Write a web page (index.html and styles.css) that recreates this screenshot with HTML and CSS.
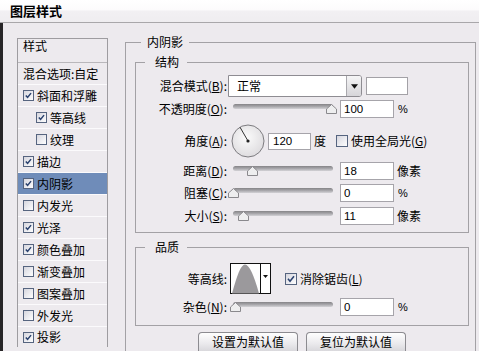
FILE: index.html
```html
<!DOCTYPE html>
<html>
<head>
<meta charset="utf-8">
<link rel="stylesheet" href="styles.css">
</head>
<body>
<div class="window">
  <div class="titlebar">图层样式</div>
  <div class="main">
    <div class="sidebar">
      <div class="item head">样式</div>
      <div class="item">混合选项:自定</div>
      <div class="item"><span class="cb"><svg viewBox="0 0 11 11"><path d="M2.2 5.4 L4.4 7.8 L8.6 2.6"/></svg></span>斜面和浮雕</div>
      <div class="item sub"><span class="cb"><svg viewBox="0 0 11 11"><path d="M2.2 5.4 L4.4 7.8 L8.6 2.6"/></svg></span>等高线</div>
      <div class="item sub"><span class="cb"></span>纹理</div>
      <div class="item"><span class="cb"><svg viewBox="0 0 11 11"><path d="M2.2 5.4 L4.4 7.8 L8.6 2.6"/></svg></span>描边</div>
      <div class="item sel"><span class="cb"><svg viewBox="0 0 11 11"><path d="M2.2 5.4 L4.4 7.8 L8.6 2.6"/></svg></span>内阴影</div>
      <div class="item"><span class="cb"></span>内发光</div>
      <div class="item"><span class="cb"><svg viewBox="0 0 11 11"><path d="M2.2 5.4 L4.4 7.8 L8.6 2.6"/></svg></span>光泽</div>
      <div class="item"><span class="cb"><svg viewBox="0 0 11 11"><path d="M2.2 5.4 L4.4 7.8 L8.6 2.6"/></svg></span>颜色叠加</div>
      <div class="item"><span class="cb"></span>渐变叠加</div>
      <div class="item"><span class="cb"></span>图案叠加</div>
      <div class="item"><span class="cb"></span>外发光</div>
      <div class="item last"><span class="cb"><svg viewBox="0 0 11 11"><path d="M2.2 5.4 L4.4 7.8 L8.6 2.6"/></svg></span>投影</div>
    </div>

    <div class="content">
      <fieldset class="group outer">
        <legend class="lg-outer">内阴影</legend>

        <fieldset class="group inner struct">
          <legend class="lg-inner">结构</legend>

          <div class="row r-mode">
            <span class="label">混合模式(<u>B</u>):</span>
            <div class="select">
              <span class="select-text">正常</span>
              <span class="select-btn"><svg viewBox="0 0 8 5"><path d="M0 0 H8 L4 5 Z"/></svg></span>
            </div>
            <span class="swatch"></span>
          </div>

          <div class="row r-opacity">
            <span class="label">不透明度(<u>O</u>):</span>
            <div class="slider"><div class="track"></div><svg class="thumb" style="left:93px" viewBox="0 0 11 10"><path d="M5.5 0.5 L10.5 5 L10.5 9.5 L0.5 9.5 L0.5 5 Z"/></svg></div>
            <span class="num">100</span>
            <span class="unit pct">%</span>
          </div>

          <div class="row r-angle">
            <span class="label">角度(<u>A</u>):</span>
            <svg class="dial" viewBox="0 0 34 34">
              <defs>
                <radialGradient id="dg" cx="45%" cy="40%" r="65%">
                  <stop offset="0" stop-color="#fbfbfb"/>
                  <stop offset="1" stop-color="#dcdadd"/>
                </radialGradient>
              </defs>
              <circle cx="17" cy="17" r="16" fill="url(#dg)" stroke="#7d7c80" stroke-width="1"/>
              <line x1="17" y1="17" x2="9" y2="3.2" stroke="#333" stroke-width="1"/>
              <circle cx="17" cy="17" r="1.6" fill="#222"/>
            </svg>
            <span class="num angle">120</span>
            <span class="unit deg">度</span>
            <span class="cb big"></span>
            <span class="cb-text">使用全局光(<u>G</u>)</span>
          </div>

          <div class="row r-dist">
            <span class="label">距离(<u>D</u>):</span>
            <div class="slider"><div class="track"></div><svg class="thumb" style="left:14px" viewBox="0 0 11 10"><path d="M5.5 0.5 L10.5 5 L10.5 9.5 L0.5 9.5 L0.5 5 Z"/></svg></div>
            <span class="num">18</span>
            <span class="unit">像素</span>
          </div>

          <div class="row r-choke">
            <span class="label">阻塞(<u>C</u>):</span>
            <div class="slider"><div class="track"></div><svg class="thumb" style="left:-5px" viewBox="0 0 11 10"><path d="M5.5 0.5 L10.5 5 L10.5 9.5 L0.5 9.5 L0.5 5 Z"/></svg></div>
            <span class="num">0</span>
            <span class="unit pct">%</span>
          </div>

          <div class="row r-size">
            <span class="label">大小(<u>S</u>):</span>
            <div class="slider"><div class="track"></div><svg class="thumb" style="left:5px" viewBox="0 0 11 10"><path d="M5.5 0.5 L10.5 5 L10.5 9.5 L0.5 9.5 L0.5 5 Z"/></svg></div>
            <span class="num">11</span>
            <span class="unit">像素</span>
          </div>
        </fieldset>

        <fieldset class="group inner quality">
          <legend class="lg-inner">品质</legend>

          <div class="row r-contour">
            <span class="label">等高线:</span>
            <svg class="contour" viewBox="0 0 41 31">
              <rect x="0.5" y="0.5" width="40" height="30" fill="#fff" stroke="#111"/>
              <path d="M2 30.5 C 7 12, 11 1.5, 15 1.5 C 19 1.5, 24 12, 29 30.5 Z" fill="#9b999c"/>
              <line x1="30.5" y1="0.5" x2="30.5" y2="30.5" stroke="#111"/>
              <path d="M33 12 H38 L35.5 15 Z" fill="#111"/>
            </svg>
            <span class="cb big aa"><svg viewBox="0 0 12 12"><path d="M2.4 5.8 L4.8 8.6 L9.6 2.8"/></svg></span>
            <span class="cb-text">消除锯齿(<u>L</u>)</span>
          </div>

          <div class="row r-noise">
            <span class="label">杂色(<u>N</u>):</span>
            <div class="slider"><div class="track"></div><svg class="thumb" style="left:-3px" viewBox="0 0 11 10"><path d="M5.5 0.5 L10.5 5 L10.5 9.5 L0.5 9.5 L0.5 5 Z"/></svg></div>
            <span class="num">0</span>
            <span class="unit pct">%</span>
          </div>
        </fieldset>

        <div class="buttons">
          <button class="btn">设置为默认值</button>
          <button class="btn">复位为默认值</button>
        </div>
      </fieldset>
    </div>
  </div>
</div>
</body>
</html>
```

FILE: styles.css
```css
* { box-sizing: border-box; }

html, body { margin: 0; padding: 0; }

body {
  width: 479px;
  height: 351px;
  overflow: hidden;
  background: #edeaee;
  color: #000;
  font-family: "Noto Sans CJK SC", "Liberation Sans", sans-serif;
  font-size: 12px;
  line-height: 16px;
}

.window {
  height: 351px;
  display: flex;
  flex-direction: column;
  overflow: hidden;
}

.titlebar {
  height: 23px;
  flex: none;
  padding-left: 10px;
  font-size: 13px;
  font-weight: bold;
  line-height: 22px;
  background: linear-gradient(#ffffff 0, #fcfbfc 45%, #f2f0f3 50%, #efedf0 100%);
  border-bottom: 1px solid #a9a7aa;
}

.main {
  flex: 1;
  min-height: 0;
  display: flex;
  align-items: flex-start;
  border-left: 3px solid #272527;
  overflow: hidden;
}

/* left list */
.sidebar {
  flex: none;
  width: 91px;
  margin-left: 14px;
  margin-top: 15px;
  border: 1px solid #9e9ca0;
  border-bottom: none;
}

.item {
  height: 22px;
  display: flex;
  align-items: center;
  padding-left: 5px;
  border-bottom: 1px solid #fbfafc;
  white-space: nowrap;
}

.item.last { height: 20px; border-bottom: none; }

.item.head {
  height: 24px;
  align-items: flex-start;
  line-height: 14px;
  border-bottom-color: #b9b7bb;
}

.item.sub { padding-left: 18px; }

.item.sel { background: #6f8cb9; }

.cb {
  flex: none;
  width: 11px;
  height: 11px;
  margin-right: 3px;
  border: 1px solid #56647f;
  background: linear-gradient(135deg, #d6d6de 0, #eeeef2 60%, #fdfdfd 100%);
  display: flex;
}

.cb svg {
  width: 100%;
  height: 100%;
  fill: none;
  stroke: #2b426f;
  stroke-width: 1.9;
}

.cb.big {
  width: 12px;
  height: 12px;
}

/* right content */
.content {
  flex: none;
  margin-left: 17px;
  padding-top: 11px;
}

.group {
  margin: 0;
  min-width: 0;
  border: 1px solid #a3a1a5;
}

.outer {
  width: 351px;
  height: 317px;
  padding: 0 6px 0 9px;
  border-bottom: none;
}

.lg-outer {
  margin-left: 6px;
  padding: 0 6px;
  line-height: 16px;
}

.inner {
  width: 334px;
  padding: 0;
}

.lg-inner {
  margin-left: 9px;
  padding: 0 8px 0 10px;
  line-height: 16px;
}

.struct {
  margin-top: 4px;
  padding-bottom: 7px;
}

.quality {
  margin-top: 6px;
  padding-bottom: 9px;
}

.row {
  display: flex;
  align-items: center;
  height: 19px;
  white-space: nowrap;
}

.label {
  flex: none;
  width: 91px;
  text-align: right;
}

.label u, .cb-text u { text-decoration-thickness: 1px; text-underline-offset: 1px; }

.r-mode { height: 22px; margin-top: 5px; }
.r-opacity { margin-top: 2px; }
.r-angle { height: 34px; margin-top: 6px; }
.r-dist { margin-top: 3px; }
.r-choke { margin-top: 3px; }
.r-size { margin-top: 4px; }
.r-contour { height: 31px; margin-top: 8px; }
.r-noise { margin-top: 3px; }

/* select */
.select {
  flex: none;
  margin-left: 1px;
  width: 134px;
  height: 22px;
  display: flex;
  border: 1px solid #8e8c92;
  border-radius: 0 3px 3px 0;
  background: #fff;
}

.select-text {
  flex: 1;
  padding-left: 8px;
  line-height: 20px;
}

.select-btn {
  flex: none;
  width: 15px;
  display: flex;
  align-items: center;
  justify-content: center;
  border-left: 1px solid #a9a8ad;
  border-radius: 0 2px 2px 0;
  background: linear-gradient(#f5f5f6, #d6d5d9);
}

.select-btn svg {
  width: 7px;
  height: 5px;
  fill: #111;
}

.swatch {
  flex: none;
  margin-left: 4px;
  width: 42px;
  height: 18px;
  background: #fff;
  border: 1px solid #a3a1a6;
}

/* slider */
.slider {
  position: relative;
  flex: none;
  width: 100px;
  height: 11px;
  margin-left: 6px;
  margin-top: 2px;
}

.track {
  height: 5px;
  border-radius: 3px;
  background: linear-gradient(#858487 0, #a3a2a6 45%, #d3d2d6 100%);
}

.thumb {
  position: absolute;
  top: 0;
  width: 11px;
  height: 10px;
  fill: #eeeeef;
  stroke: #8a898d;
  stroke-width: 1;
}

/* numeric fields */
.num {
  flex: none;
  margin-left: 7px;
  width: 54px;
  height: 18px;
  padding-left: 3px;
  background: #fff;
  border: 1px solid #a6a4aa;
  font-family: "Liberation Sans", sans-serif;
  font-size: 11.5px;
  line-height: 16px;
}

.num.angle {
  margin-left: 3px;
  width: 43px;
  height: 17px;
  padding-left: 4px;
  line-height: 15px;
}

.unit {
  flex: none;
  margin-left: 3px;
}

.unit.pct {
  margin-left: 4px;
  font-family: "Liberation Sans", sans-serif;
  font-size: 11px;
}

.unit.deg { margin-left: 3px; }

.dial {
  flex: none;
  margin-left: 4px;
  width: 34px;
  height: 34px;
}

.r-angle .cb { margin-left: 10px; }

.cb-text { margin-left: 0; }

/* contour */
.contour {
  flex: none;
  margin-left: 3px;
  width: 41px;
  height: 31px;
}

.cb.aa { margin-left: 14px; }

/* buttons */
.buttons {
  display: flex;
  justify-content: center;
  gap: 8px;
  margin-top: 6px;
}

.btn {
  width: 100px;
  height: 19px;
  padding: 0;
  margin: 0;
  border: 1px solid #8c8b90;
  border-bottom: none;
  border-radius: 4px 4px 0 0;
  background: linear-gradient(#fefefe 0, #ecebee 55%, #d9d8dc 100%);
  color: #000;
  font-family: "Noto Sans CJK SC", sans-serif;
  font-size: 12px;
  line-height: 16px;
}
```
